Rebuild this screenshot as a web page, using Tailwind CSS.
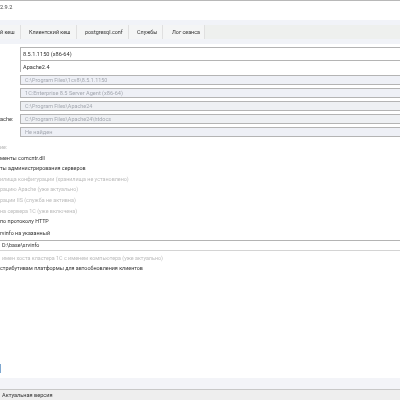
<!DOCTYPE html>
<html lang="ru">
<head>
  <meta charset="UTF-8" />
  <title>Настройки</title>
  <script src="https://cdn.jsdelivr.net/npm/@tailwindcss/browser@4"></script>
</head>
<body class="bg-white">
  <div class="w-[400px] h-[400px] overflow-hidden flex flex-col bg-white text-[#333] text-[5.6px] leading-[10px] font-['Roboto','Noto_Sans',sans-serif] blur-[0.3px]">
    <div class="h-[20px] shrink-0 border-t border-[#b8b8b8] pt-[1px] text-[#444]">2.9.2</div>

    <!-- вкладки -->
    <div class="h-[24px] shrink-0 bg-[#f1f3f8] py-[5px] text-[5.4px]">
      <div class="h-[14px] bg-[#eef0ee] flex items-center">
        <span class="w-[21px] h-full flex items-center bg-[#f4f5f5] border-r border-[#e0e0e0]">й кеш</span>
        <span class="w-[56px] h-full flex items-center pl-[8px] bg-[#f4f5f5] border-r border-[#e0e0e0]">Клиентский кеш</span>
        <span class="w-[52px] h-full flex items-center pl-[8px] bg-[#f4f5f5] border-r border-[#e0e0e0]">postgresql.conf</span>
        <span class="w-[34px] h-full flex items-center pl-[8px] bg-[#f4f5f5] border-r border-[#e0e0e0]">Службы</span>
        <span class="w-[42px] h-full flex items-center pl-[9px] bg-[#f4f5f5] border-r border-[#e0e0e0]">Лог сеанса</span>
      </div>
    </div>

    <!-- поля -->
    <div class="flex flex-col pt-[3px] shrink-0">
      <div class="h-[13px] ml-[20px] pl-[2px] border-t border-l border-[#b4b4b4] bg-white flex items-center">8.5.1.1150 (x86-64)</div>
      <div class="h-[12px] ml-[20px] pl-[2px] border-t border-l border-[#b4b4b4] bg-white flex items-center mb-[3px]">Apache2.4</div>
      <div class="h-[10px] ml-[20px] pl-[4px] border-t border-l border-b border-[#b4b4b4] bg-[#eef0f6] text-[#a4a8b0] text-[5.45px] flex items-center mb-[3px]">C:\Program Files\1cv8\8.5.1.1150</div>
      <div class="h-[10px] ml-[20px] pl-[4px] border-t border-l border-b border-[#b4b4b4] bg-[#eef0f6] text-[#a4a8b0] flex items-center mb-[3px]">1C:Enterprise 8.5 Server Agent (x86-64)</div>
      <div class="h-[10px] ml-[20px] pl-[4px] border-t border-l border-b border-[#b4b4b4] bg-[#eef0f3] text-[#a4a8b0] text-[5.45px] flex items-center mb-[3px]">C:\Program Files\Apache24</div>
      <div class="h-[10px] flex mb-[3px]">
        <span class="w-[20px] flex items-center">ache:</span>
        <div class="flex-1 pl-[4px] border-t border-l border-b border-[#b4b4b4] bg-[#eef0f3] text-[#a4a8b0] text-[5.45px] flex items-center">C:\Program Files\Apache24\htdocs</div>
      </div>
      <div class="h-[10px] ml-[20px] pl-[4px] border-t border-l border-b border-[#b4b4b4] bg-[#eef0f6] text-[#a4a8b0] flex items-center">Не найден</div>
    </div>

    <!-- опции -->
    <div class="flex flex-col pt-[5px] shrink-0 text-[5.4px]">
      <div class="h-[10.6px] text-[#b4b4b4]">ие:</div>
      <div class="h-[10.6px]">менты comcntr.dll</div>
      <div class="h-[10.6px]">ты администрирования серверов</div>
      <div class="h-[10.6px] text-[#bbb]">илища конфигурации (хранилища не установлено)</div>
      <div class="h-[10.6px] text-[#bbb]">рацию Apache (уже актуально)</div>
      <div class="h-[10.6px] text-[#bbb]">рации IIS (служба не активна)</div>
      <div class="h-[10.6px] text-[#bbb]">на сервера 1С (уже включена)</div>
      <div class="h-[11.5px]">по протоколу HTTP</div>
      <div class="h-[12px]">rvinfo на указанный</div>
      <div class="h-[11px] pl-[2px] border-t border-b border-t-[#b4b4b4] border-b-[#d4d4d4] flex items-center">D:\base\srvinfo</div>
      <div class="h-[10.6px] pl-[2px] mt-[2px] text-[#bbb]">имен хоста кластера 1С с именем компьютера (уже актуально)</div>
      <div class="h-[10.6px]">стрибутивам платформы для автообновления клиентов</div>
    </div>

    <div class="flex-1 flex items-end pb-[5px]">
      <div class="w-[1px] h-[9px] bg-[#7fa8d0]"></div>
    </div>

    <div class="h-[12px] shrink-0 bg-[#f3f4f8] border-b border-[#c8c8c8]"></div>
    <div class="h-[10px] shrink-0 bg-[#eeeeee] pl-[2px] flex items-center">Актуальная версия</div>
  </div>
</body>
</html>
